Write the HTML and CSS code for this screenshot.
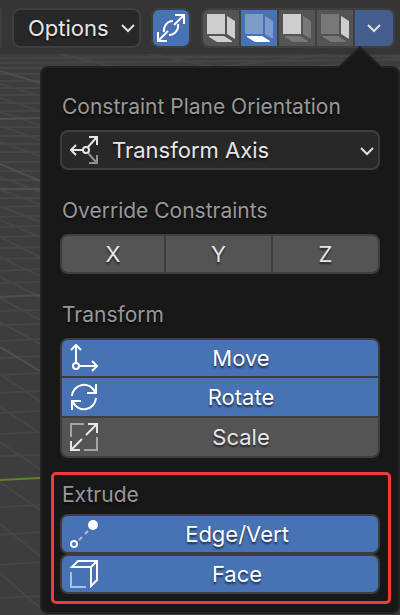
FILE: index.html
```html
<!DOCTYPE html>
<html lang="en">
<head>
<meta charset="utf-8">
<meta name="viewport" content="width=device-width, initial-scale=1">
<title>Viewport Options</title>
<link rel="stylesheet" href="styles.css">
</head>
<body>
<svg class="viewport-grid" viewBox="0 0 400 615" preserveAspectRatio="xMinYMin slice" aria-hidden="true">
  <g class="grid-faint">
    <path d="M0 58L400 56M0 63L400 60M0 68H400M0 74H40M0 81H40M0 88H40M0 95H40M0 103H40M0 111H40M0 127H40M0 136H40M0 144H40M0 152H40M0 162H40M0 171H40M0 180H40M0 198H40M0 207L40 206M0 217L40 216M0 227L40 226M0 237L40 236M0 248L40 247M0 259L40 258M0 271L40 269M0 283L40 282M0 311L40 310M0 325L40 324M0 341L40 339M0 358L40 356M0 375L40 373M0 393L40 391M0 413L40 411M0 434L40 432M0 456L40 455M0 507L40 505M0 535L40 532M0 565L40 562M0 598L40 596"/>
    <path d="M0 84L40 96M0 98L40 111M0 112L40 125M0 126L40 140M0 142L40 156M0 177L40 192M0 190L40 204M0 206L40 222M0 220L40 237M0 237L40 257M0 257L40 276M0 277L40 297M0 298L40 320M0 322L40 344M0 374L40 401M0 407L40 433M0 442L40 469M0 482L40 510M0 524L40 556M0 573L40 608"/>
    <path d="M60 54L120 68M150 54L220 68M210 68L330 54M300 68L400 58"/>
  </g>
  <path class="grid-strong" d="M0 119L40 118M0 189H40M0 297L40 295M0 71L40 83M0 164L40 181M0 347L40 371"/>
  <path class="grid-axis" d="M0 480L40 478"/>
</svg>

<header class="header">
  <span class="header-stub"></span>
  <button class="menu-button" type="button">Options
    <svg class="chevron" viewBox="0 0 14 10" aria-hidden="true"><path d="M1 2L7 8L13 2"/></svg>
  </button>
  <button class="icon-toggle" type="button" aria-pressed="true" aria-label="Link">
    <svg class="icon" viewBox="0 0 28 28" aria-hidden="true">
      <path d="M18 1H27V10M1 18V27H10M27 1L17 11M1 27L11 17M7 18C6 13 10 7 16 7M12 21C18 21 22 15 21 10"/>
    </svg>
  </button>
  <div class="plane-group">
    <button class="plane" type="button" aria-label="All planes">
      <svg class="cube" viewBox="0 0 28 28" aria-hidden="true"><path d="M0 0H18V20H0Z"/><path d="M20 2L28 7V25L20 20Z"/><path d="M2 22H17L25 27V28H10L2 23Z"/></svg>
    </button>
    <button class="plane is-active" type="button" aria-pressed="true" aria-label="Floor plane">
      <svg class="cube" viewBox="0 0 28 28" aria-hidden="true"><path class="dim" d="M0 0H18V20H0Z"/><path class="dim" d="M20 2L28 7V25L20 20Z"/><path d="M2 22H17L25 27V28H10L2 23Z"/></svg>
    </button>
    <button class="plane" type="button" aria-label="Front plane">
      <svg class="cube" viewBox="0 0 28 28" aria-hidden="true"><path d="M0 0H18V20H0Z"/><path class="dim" d="M20 2L28 7V25L20 20Z"/><path class="dim" d="M2 22H17L25 27V28H10L2 23Z"/></svg>
    </button>
    <button class="plane" type="button" aria-label="Side plane">
      <svg class="cube" viewBox="0 0 28 28" aria-hidden="true"><path class="dim" d="M0 0H18V20H0Z"/><path d="M20 2L28 7V25L20 20Z"/><path class="dim" d="M2 22H17L25 27V28H10L2 23Z"/></svg>
    </button>
    <button class="plane plane-menu" type="button" aria-expanded="true" aria-label="Plane settings">
      <svg class="chevron" viewBox="0 0 14 10" aria-hidden="true"><path d="M1 2L7 8L13 2"/></svg>
    </button>
  </div>
</header>

<main class="popover">
  <svg class="pointer" viewBox="0 0 44 24" aria-hidden="true"><path class="pointer-fill" d="M0 24L2 20L22 1L42 20L44 24Z"/><path class="pointer-edge" d="M2 20L22 1L42 20"/></svg>

  <section class="group">
    <label class="title" for="orientation">Constraint Plane Orientation</label>
    <div class="select-wrap">
      <svg class="icon select-icon" viewBox="0 0 28 28" aria-hidden="true">
        <path class="soft" d="M18 17L26 26M27 19V27H19"/>
        <path d="M13 14H1M6 9L1 14L6 19M18 11L26 2M19 1H27V9"/>
        <circle cx="16" cy="14" r="3"/>
      </svg>
      <select class="select" id="orientation"><option>Transform Axis</option></select>
      <svg class="chevron select-chevron" viewBox="0 0 14 10" aria-hidden="true"><path d="M1 2L7 8L13 2"/></svg>
    </div>
  </section>

  <section class="group">
    <h2 class="title">Override Constraints</h2>
    <div class="axes">
      <button class="axis" type="button">X</button>
      <button class="axis" type="button">Y</button>
      <button class="axis" type="button">Z</button>
    </div>
  </section>

  <section class="group">
    <h2 class="title">Transform</h2>
    <div class="stack">
      <button class="row is-active" type="button" aria-pressed="true">
        <svg class="icon" viewBox="0 0 28 28" aria-hidden="true"><path d="M6 19V1M1 6L6 1L11 6M9 22H27M22 17L27 22L22 27"/><circle cx="6" cy="22" r="3"/></svg>
        <span class="row-text">Move</span>
      </button>
      <button class="row is-active" type="button" aria-pressed="true">
        <svg class="icon" viewBox="0 0 28 28" aria-hidden="true"><path d="M2 13A12 12 0 0 1 25 9M26 1V10H17M26 15A12 12 0 0 1 3 19M2 27V18H11"/></svg>
        <span class="row-text">Rotate</span>
      </button>
      <button class="row" type="button" aria-pressed="false">
        <svg class="icon" viewBox="0 0 28 28" aria-hidden="true"><path class="soft" d="M1 14V1H14M27 14V27H14"/><path d="M18 1H27V10M27 1L16 12M1 18V27H10M1 27L12 16"/></svg>
        <span class="row-text">Scale</span>
      </button>
    </div>
  </section>

  <section class="group group-marked">
    <h2 class="title">Extrude</h2>
    <button class="row row-single is-active" type="button" aria-pressed="true">
      <svg class="icon" viewBox="0 0 28 28" aria-hidden="true"><path class="soft" d="M9 20L12 17M15 14L18 11"/><circle cx="4" cy="24" r="3"/><circle class="solid" cx="23" cy="5" r="5"/></svg>
      <span class="row-text">Edge/Vert</span>
    </button>
    <button class="row row-single is-active" type="button" aria-pressed="true">
      <svg class="icon" viewBox="0 0 28 28" aria-hidden="true"><path class="soft" d="M1 12V27H16"/><path d="M2 7L8 1H27V20L21 26V7ZM21 7L27 1"/></svg>
      <span class="row-text">Face</span>
    </button>
  </section>
</main>
</body>
</html>
```
FILE: styles.css
```css
* {
  box-sizing: border-box;
}

body {
  margin: 0;
  min-height: 100vh;
  overflow: hidden;
  background: #3d3d3d;
  color: #e6e6e6;
  font: 22px/24px Inter, "Liberation Sans", sans-serif;
  text-shadow: 0 2px 2px rgba(0, 0, 0, 0.6);
}

button,
select {
  margin: 0;
  padding: 0;
  border: 0;
  color: inherit;
  font: inherit;
  text-shadow: inherit;
}

svg {
  display: block;
  flex: none;
}

.viewport-grid {
  position: absolute;
  inset: 0;
  z-index: -1;
  width: 100%;
  height: 100%;
  fill: none;
  stroke-width: 2;
}

.grid-faint {
  stroke: #464646;
}

.grid-strong {
  stroke: #4f4f4f;
}

.grid-axis {
  stroke: #5c8425;
}

.header {
  display: flex;
  padding: 8px 5px 6px 0;
  background: #353535;
}

.header-stub {
  width: 2px;
  height: 40px;
  margin-right: 10px;
  border-radius: 0 6px 6px 0;
  background: #3f3f3f;
}

.menu-button {
  display: flex;
  flex: 1;
  align-items: center;
  justify-content: space-between;
  height: 40px;
  margin-right: 10px;
  padding: 0 4px 0 14px;
  border: 2px solid #3f3f3f;
  border-radius: 8px;
  background: #282828;
}

.chevron {
  width: 14px;
  height: 10px;
  fill: none;
  stroke: #e0e0e0;
  stroke-width: 2;
}

.icon {
  width: 28px;
  height: 28px;
  fill: none;
  stroke: currentColor;
  stroke-width: 2;
}

.soft {
  opacity: 0.55;
}

.solid {
  fill: currentColor;
  stroke: none;
}

.icon-toggle {
  display: grid;
  place-items: center;
  width: 40px;
  height: 40px;
  margin-right: 10px;
  border: 2px solid #3f3f3f;
  border-radius: 8px;
  background: #4772b3;
  color: #fff;
}

.plane-group {
  display: flex;
  gap: 2px;
  height: 40px;
  border: 2px solid #3f3f3f;
  border-radius: 8px;
  background: #3f3f3f;
  overflow: hidden;
}

.plane {
  display: grid;
  place-items: center;
  width: 36px;
  background: #545454;
  color: #cecece;
}

.plane-menu {
  width: 38px;
  background: #435f8f;
}

.plane.is-active {
  background: #4772b3;
  color: #fff;
}

.cube {
  width: 28px;
  height: 28px;
  fill: currentColor;
}

.dim {
  opacity: 0.3;
}

.popover {
  position: relative;
  display: flex;
  flex-direction: column;
  gap: 28px;
  margin: 12px 0 2px 40px;
  padding: 27px 18px 8px;
  border: 2px solid #242424;
  border-radius: 8px;
  background: #181818;
}

.pointer {
  position: absolute;
  top: -22px;
  right: 16px;
  width: 44px;
  height: 24px;
}

.pointer-fill {
  fill: #181818;
}

.pointer-edge {
  fill: none;
  stroke: #242424;
  stroke-width: 2;
}

.title {
  display: block;
  margin: 0 0 11px 2px;
  padding-top: 1px;
  color: #989898;
  font-size: 21px;
  font-weight: 400;
}

.group:first-of-type .title {
  padding-top: 0;
}

.select-wrap {
  position: relative;
}

.select {
  display: block;
  width: 100%;
  height: 40px;
  padding: 0 30px 0 50px;
  border: 2px solid #3d3d3d;
  border-radius: 8px;
  background: #282828;
  appearance: none;
}

.select-icon {
  position: absolute;
  top: 6px;
  left: 10px;
}

.select-chevron {
  position: absolute;
  top: 16px;
  right: 6px;
}

.axes {
  display: grid;
  grid-template-columns: 102px 1fr 1fr;
  gap: 2px;
  height: 40px;
  border: 2px solid #3d3d3d;
  border-radius: 8px;
  background: #3d3d3d;
  overflow: hidden;
}

.axis {
  background: #545454;
}

.stack {
  display: grid;
  grid-template-rows: 36px 38px 38px;
  gap: 2px;
  border: 2px solid #3d3d3d;
  border-radius: 8px;
  background: #3d3d3d;
  overflow: hidden;
}

.row {
  display: flex;
  align-items: center;
  width: 100%;
  padding: 0 2px 0 8px;
  background: #545454;
}

.row.is-active {
  background: #4772b3;
  color: #fff;
}

.row-text {
  flex: 1;
  padding-left: 8px;
}

.row-single {
  height: 40px;
  border: 2px solid #3d3d3d;
  border-radius: 8px;
}

.row-single .row-text {
  padding-left: 0;
}

.group-marked {
  margin: -14px -11px 0 -9px;
  padding: 7px 8px 7px 6px;
  border: 3px solid #f23a3a;
  border-radius: 5px;
}

.group-marked .title {
  margin-bottom: 7px;
}
```
